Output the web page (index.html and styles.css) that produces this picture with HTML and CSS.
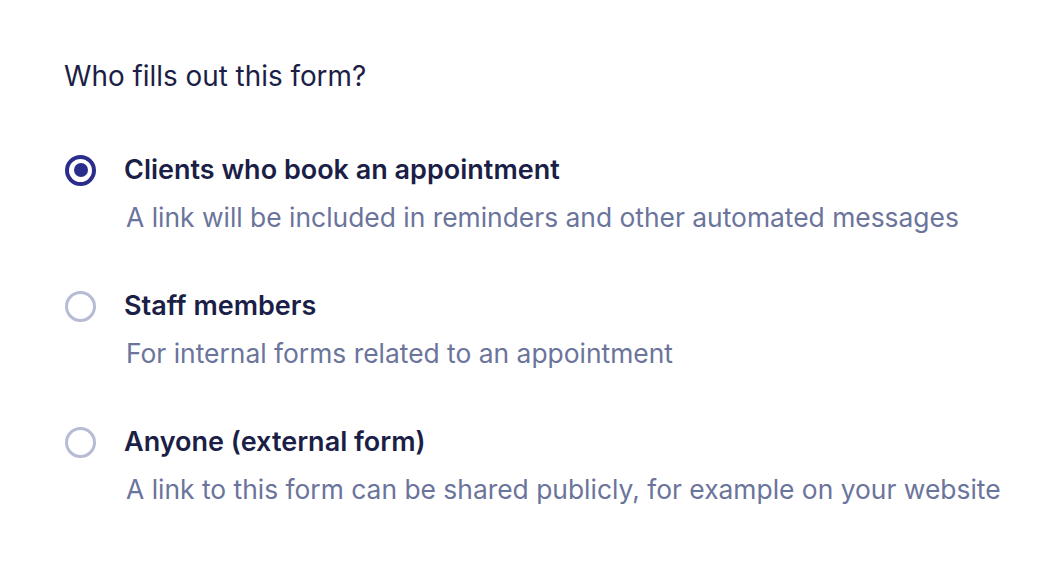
FILE: index.html
```html
<!DOCTYPE html>
<html lang="en">
<head>
<meta charset="utf-8">
<title>Who fills out this form?</title>
<link rel="stylesheet" href="styles.css">
</head>
<body>
<main class="form-section">
  <h2 class="question">Who fills out this form?</h2>
  <div class="options" role="radiogroup">
    <label class="option">
      <span class="radio radio--checked"><span class="radio-dot"></span></span>
      <span class="option-text">
        <span class="option-title">Clients who book an appointment</span>
        <span class="option-desc">A link will be included in reminders and other automated messages</span>
      </span>
    </label>
    <label class="option">
      <span class="radio"></span>
      <span class="option-text">
        <span class="option-title">Staff members</span>
        <span class="option-desc">For internal forms related to an appointment</span>
      </span>
    </label>
    <label class="option">
      <span class="radio"></span>
      <span class="option-text">
        <span class="option-title">Anyone (external form)</span>
        <span class="option-desc">A link to this form can be shared publicly, for example on your website</span>
      </span>
    </label>
  </div>
</main>
</body>
</html>
```
FILE: styles.css
```css
html, body {
  margin: 0;
  padding: 0;
  background: #ffffff;
}

body {
  font-family: Inter, "Noto Sans", sans-serif;
  color: #1b1e46;
}

.form-section {
  padding: 56px 0 0 64px;
}

.question {
  margin: 0;
  font-size: 27.85px;
  line-height: 40px;
  font-weight: 400;
  color: #1b1e46;
}

.options {
  display: flex;
  flex-direction: column;
  gap: 53px;
  margin-top: 56px;
}

.option {
  display: flex;
  align-items: flex-start;
  gap: 28px;
  padding-left: 1px;
  cursor: pointer;
}

.radio {
  flex: none;
  box-sizing: border-box;
  width: 31px;
  height: 31px;
  margin-top: 2.5px;
  border-radius: 50%;
  border: 3.5px solid #b5bcd3;
  display: flex;
  align-items: center;
  justify-content: center;
}

.radio--checked {
  border: 4.5px solid #2a2d8b;
}

.radio-dot {
  width: 14px;
  height: 14px;
  border-radius: 50%;
  background: #2a2d8b;
}

.option-text {
  display: flex;
  flex-direction: column;
  gap: 11px;
}

.option-title {
  font-size: 27px;
  line-height: 36px;
  font-weight: 600;
  color: #1b1e46;
}

.option-desc {
  font-size: 26.4px;
  line-height: 36px;
  font-weight: 400;
  color: #6b749b;
  padding-left: 2px;
}
```
